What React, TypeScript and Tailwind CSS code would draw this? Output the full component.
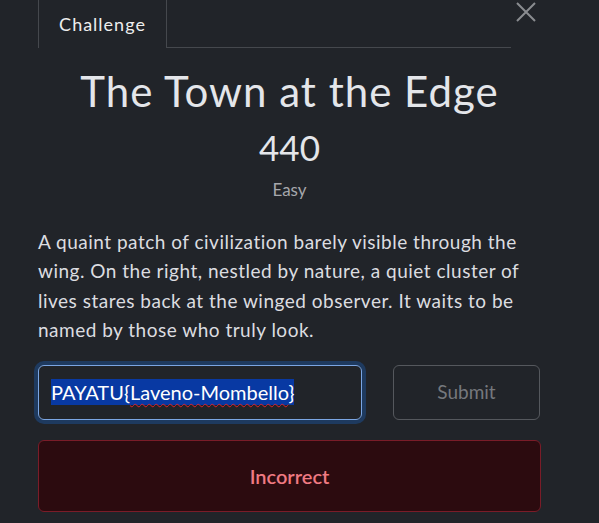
import React from "react";

export default function App() {
    return (
        <div className="w-[599px] h-[523px] overflow-hidden bg-[#212429] font-['Lato',sans-serif] text-[#e4e6ea]">
            {/* tab bar */}
            <div className="flex items-start pl-[38px]">
                <div className="flex w-[473px] h-[48px]">
                    <div className="border-l border-r border-[#45484d] h-full w-[129px] flex items-center justify-center text-[18px] tracking-[1px] text-[#eeeeee] pt-[1px]">
                        Challenge
                    </div>
                    <div className="flex-1 border-b border-[#45484d]"></div>
                </div>
                <button className="ml-[3px] mt-[1px] text-[#8a8c90]">
                    <svg width="24" height="22" viewBox="0 0 24 22">
                        <path d="M3 2 L21 20 M21 2 L3 20" stroke="currentColor" strokeWidth="2" fill="none" />
                    </svg>
                </button>
            </div>

            <div className="pl-[38px] w-[541px]">
                <h1 className="text-[42px] leading-none text-center mt-[22px] tracking-[1px]">The Town at the Edge</h1>
                <div className="text-[35px] leading-none text-center mt-[18px]">440</div>
                <div className="text-[17px] text-[#a6a8ac] text-center mt-[12px]">Easy</div>

                <p className="text-[19px] leading-[29.6px] tracking-[0.5px] text-[#dcdde0] mt-[24px]">
                    A quaint patch of civilization barely visible through the wing. On the right, nestled by nature, a quiet cluster of lives stares back at the winged observer. It waits to be named by those who truly look.
                </p>

                <div className="flex mt-[20px] gap-[31px]">
                    <div className="w-[324px] h-[55px] rounded-[6px] border border-[#7ba6e3] ring-4 ring-[#1e3a5f] flex items-center px-[12px]">
                        <span className="text-[20px] leading-[26px] text-white bg-[#0839a3]">
                            PAYATU{"{"}
                            <span className="underline decoration-wavy decoration-[#e0202a] underline-offset-[3px] decoration-1">Laveno-Mombello</span>
                            {"}"}
                        </span>
                    </div>
                    <button className="w-[147px] h-[55px] rounded-[6px] border border-[#55585d] text-[19px] text-[#75787d]">
                        Submit
                    </button>
                </div>

                <div className="mt-[20px] h-[72px] rounded-[6px] border border-[#7a1c28] bg-[#2c0b0f] flex items-center justify-center text-[20px] font-semibold text-[#f07a82]">
                    Incorrect
                </div>
            </div>
        </div>
    );
}
